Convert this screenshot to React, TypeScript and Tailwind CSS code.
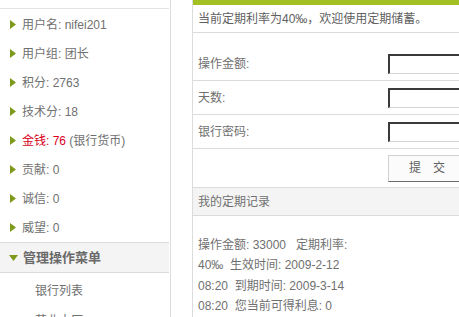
import React from "react";

const font = { fontFamily: '"Liberation Sans", "Noto Sans CJK SC", sans-serif' };

function Tri() {
  return (
    <svg width="6" height="9" viewBox="0 0 6 9" className="shrink-0">
      <polygon points="0,0 6,4.5 0,9" fill="#7e9a1c" />
    </svg>
  );
}

function Item({ children }: { children: React.ReactNode }) {
  return (
    <div className="h-[29px] flex items-center pl-[10px] gap-[6px]">
      <Tri />
      <span>{children}</span>
    </div>
  );
}

export default function App() {
  return (
    <div
      className="w-[459px] h-[317px] overflow-hidden bg-white flex text-[12px] text-[#707070]"
      style={font}
    >
      {/* Left */}
      <div className="w-[171px] shrink-0 border-r border-[#dcdcdc] pt-[8px]">
        <div className="border-t border-[#e3e3e3] mr-[1px] pt-[1px]">
          <Item>用户名: nifei201</Item>
          <Item>用户组: 团长</Item>
          <Item>积分: 2763</Item>
          <Item>技术分: 18</Item>
          <Item>
            <span className="text-[#d9001b]">金钱: 76</span> (银行货币)
          </Item>
          <Item>贡献: 0</Item>
          <Item>诚信: 0</Item>
          <Item>威望: 0</Item>
        </div>
        <div className="mr-[1px] h-[31px] border-y border-[#dcdcdc] bg-[#f4f4f4] flex items-center pl-[9px] gap-[5px] font-bold text-[13px] text-[#6a6a6a]">
          <svg width="9" height="6" viewBox="0 0 9 6">
            <polygon points="0,0 9,0 4.5,6" fill="#7e9a1c" />
          </svg>
          <span>管理操作菜单</span>
        </div>
        <div className="pl-[35px] h-[33px] flex items-center pt-[2px]">银行列表</div>
        <div className="pl-[35px] h-[29px] flex items-center">营业大厅</div>
      </div>

      <div className="w-[21px] shrink-0" />

      {/* Right */}
      <div className="flex-1 border-l border-[#dcdcdc] flex flex-col">
        <div className="h-[5px] bg-[#a2bf24] shrink-0" />
        <div className="h-[28px] border-b border-[#dcdcdc] flex items-center pl-[5px] text-[#606060] shrink-0">
          当前定期利率为40‰，欢迎使用定期储蓄。
        </div>
        <div className="h-[14px] shrink-0" />
        {["操作金额:", "天数:", "银行密码:"].map((l) => (
          <div
            key={l}
            className="h-[34px] border-b border-[#dcdcdc] flex items-center pl-[5px] shrink-0"
          >
            <span className="w-[190px] shrink-0">{l}</span>
            <div className="h-[20px] w-[90px] shrink-0 border-t-2 border-l-2 border-t-[#3a3a3a] border-l-[#3a3a3a] border-b border-r border-b-[#d4d4d4] border-r-[#d4d4d4] bg-white" />
          </div>
        ))}
        <div className="h-[39px] border-b border-[#dcdcdc] flex items-center pl-[195px] shrink-0">
          <div className="h-[27px] w-[80px] shrink-0 border border-[#d0d0d0] border-b-[#6a6a6a] bg-[#fbfbfb] flex items-center pl-[20px] text-[#606060] tracking-[12px]">
            提交
          </div>
        </div>
        <div className="h-[28px] bg-[#f4f4f4] border-b border-[#dcdcdc] flex items-center pl-[5px] shrink-0">
          我的定期记录
        </div>
        <div className="pl-[5px] pt-[19px] leading-[20.4px]">
          <div>操作金额: 33000&nbsp;&nbsp;&nbsp;定期利率:</div>
          <div>40‰&nbsp;&nbsp;生效时间: 2009-2-12</div>
          <div>08:20&nbsp;&nbsp;到期时间: 2009-3-14</div>
          <div>08:20&nbsp;&nbsp;您当前可得利息: 0</div>
        </div>
      </div>
    </div>
  );
}
